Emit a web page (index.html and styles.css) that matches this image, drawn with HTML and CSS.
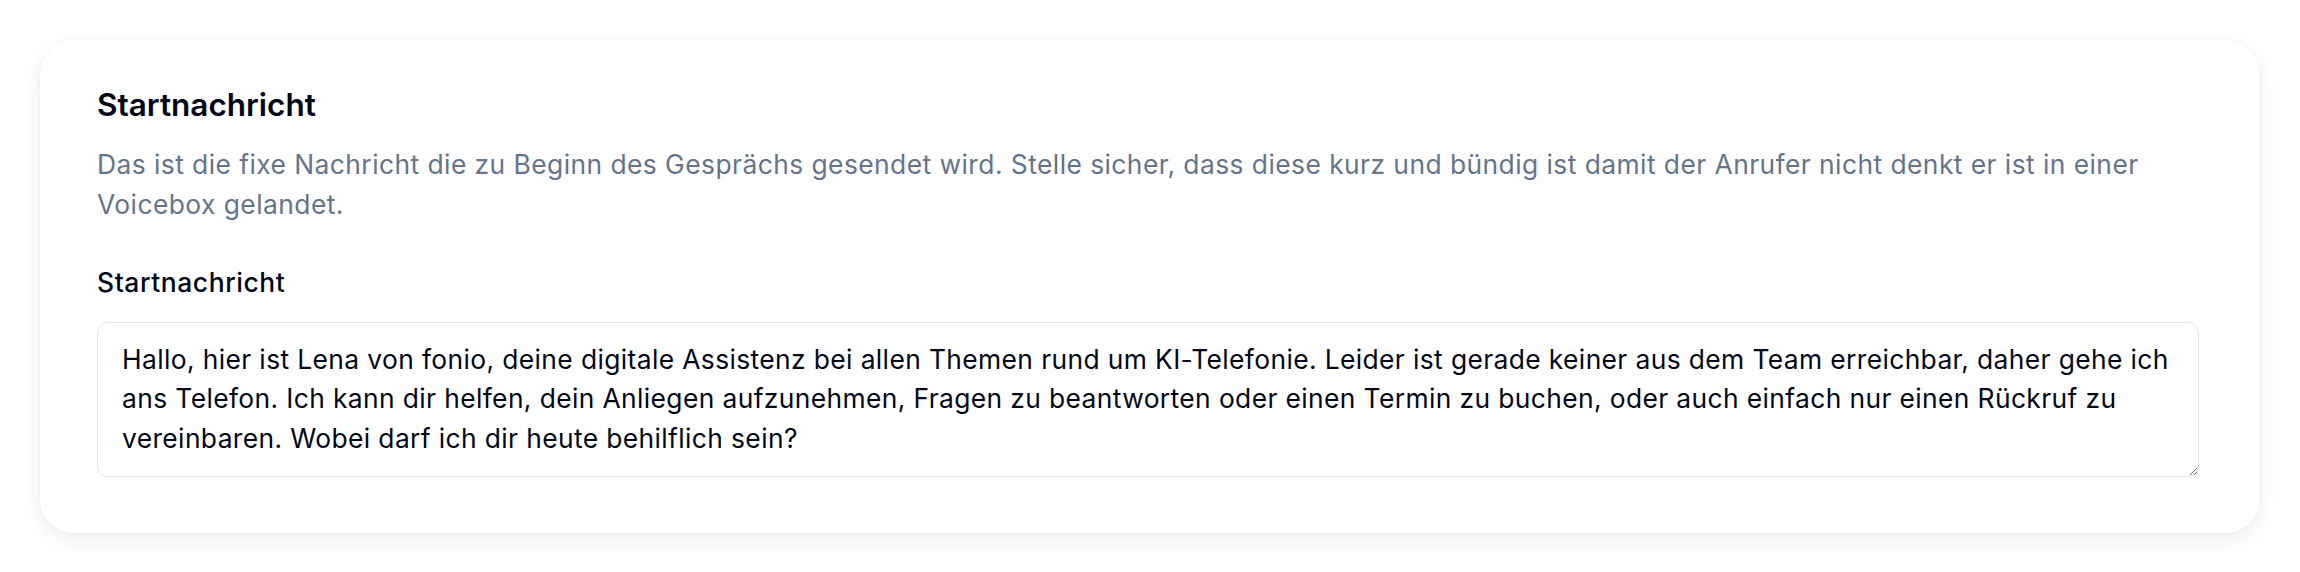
FILE: index.html
```html
<!DOCTYPE html>
<html lang="de">
<head>
<meta charset="utf-8">
<title>Startnachricht</title>
<link rel="stylesheet" href="styles.css">
</head>
<body>
<main class="page">
  <section class="card">
    <h2 class="card-title">Startnachricht</h2>
    <p class="card-desc">Das ist die fixe Nachricht die zu Beginn des Gesprächs gesendet wird. Stelle sicher, dass diese kurz und bündig ist damit der Anrufer nicht denkt er ist in einer Voicebox gelandet.</p>
    <div class="field">
      <label class="field-label" for="start">Startnachricht</label>
      <textarea id="start" class="field-input">Hallo, hier ist Lena von fonio, deine digitale Assistenz bei allen Themen rund um KI-Telefonie. Leider ist gerade keiner aus dem Team erreichbar, daher gehe ich ans Telefon. Ich kann dir helfen, dein Anliegen aufzunehmen, Fragen zu beantworten oder einen Termin zu buchen, oder auch einfach nur einen Rückruf zu vereinbaren. Wobei darf ich dir heute behilflich sein?</textarea>
    </div>
  </section>
</main>
</body>
</html>
```
FILE: styles.css
```css
* { box-sizing: border-box; }
html, body { margin: 0; padding: 0; background: #ffffff; }
body { font-family: Inter, "Noto Sans", sans-serif; color: #0f172a; }
.page { padding: 40px; }
.card {
  width: 2220px;
  background: #ffffff;
  border-radius: 34px;
  padding: 45px 61px 56px 57px;
  box-shadow: 0 6px 22px rgba(15, 23, 42, 0.07), 0 1px 4px rgba(15, 23, 42, 0.04);
}
.card-title {
  margin: 0;
  font-size: 31.5px;
  line-height: 40px;
  font-weight: 600;
  color: #020817;
}
.card-desc {
  margin: 20px 0 0;
  font-size: 26.4px;
  line-height: 39.6px;
  letter-spacing: 0.44px;
  color: #64748b;
}
.field { margin-top: 39px; display: flex; flex-direction: column; gap: 19px; }
.field-label {
  font-size: 26.4px;
  line-height: 39.6px;
  letter-spacing: 0.6px;
  font-weight: 500;
  color: #020817;
}
.field-input {
  display: block;
  width: 100%;
  height: 155px;
  padding: 17px 24px;
  border: 1.5px solid #e2e8f0;
  border-radius: 11px;
  font-family: Inter, "Noto Sans", sans-serif;
  font-size: 26.4px;
  line-height: 39.6px;
  letter-spacing: 0.38px;
  color: #020817;
  background: #ffffff;
  resize: vertical;
  outline: none;
}
```
